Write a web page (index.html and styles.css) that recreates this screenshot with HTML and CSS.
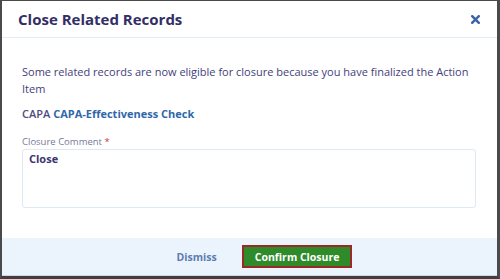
FILE: index.html
```html
<!DOCTYPE html>
<html lang="en">
<head>
  <meta charset="UTF-8" />
  <title>Close Related Records</title>
  <link rel="stylesheet" href="styles.css">
</head>
<body>
  <div class="modal">
    <header class="modal-header">
      <h1>Close Related Records</h1>
      <svg class="close-btn" width="9" height="9" viewBox="0 0 9 9">
        <path d="M1.2 1.2 L7.8 7.8 M7.8 1.2 L1.2 7.8" stroke="#3b63a4" stroke-width="2.4" stroke-linecap="square"/>
      </svg>
    </header>

    <div class="modal-body">
      <p class="intro">Some related records are now eligible for closure because you have finalized the Action Item</p>
      <p class="record"><span class="record-type">CAPA</span> <a href="#" class="record-link">CAPA-Effectiveness Check</a></p>
      <label class="field-label">Closure Comment <span class="required">*</span></label>
      <div class="comment-box">Close</div>
    </div>

    <footer class="modal-footer">
      <button class="btn-dismiss">Dismiss</button>
      <button class="btn-confirm">Confirm Closure</button>
    </footer>
  </div>
</body>
</html>
```

FILE: styles.css
```css
html, body {
  margin: 0;
  padding: 0;
  background: #ffffff;
}

body {
  font-family: 'Open Sans', 'Liberation Sans', sans-serif;
  color: #3f3a75;
}

.modal {
  box-sizing: border-box;
  width: 500px;
  height: 279px;
  display: flex;
  flex-direction: column;
  border-top: 1px solid #4a4a4a;
  border-left: 2px solid #4a4a4a;
  border-right: 3px solid #4a4a4a;
  border-bottom: 3px solid #3e3e3e;
  background: #ffffff;
}

/* Header */
.modal-header {
  height: 36px;
  display: flex;
  justify-content: space-between;
  align-items: center;
  padding: 0 17px 0 16px;
  border-bottom: 1px solid #e4ecf6;
}

.modal-header h1 {
  margin: 0;
  font-size: 15px;
  font-weight: bold;
  color: #322e66;
}

.close-btn {
  display: block;
}

/* Body */
.modal-body {
  flex: 1;
  padding: 25px 21px 0 20px;
}

.intro {
  margin: 0;
  font-size: 11px;
  line-height: 17px;
  color: #433e7a;
}

.record {
  margin: 8px 0 0 0;
  font-size: 11px;
  line-height: 17px;
  font-weight: 600;
}

.record-type {
  color: #4d4a7e;
}

.record-link {
  color: #2f67aa;
  text-decoration: none;
  font-weight: bold;
}

.field-label {
  display: block;
  margin-top: 13px;
  font-size: 9.5px;
  line-height: 13px;
  color: #7a779a;
}

.required {
  color: #d9352f;
}

.comment-box {
  box-sizing: border-box;
  margin-top: 1px;
  height: 59px;
  padding: 0 6px;
  border: 1px solid #dde9f7;
  border-radius: 3px;
  font-size: 11px;
  line-height: 17px;
  font-weight: bold;
  color: #3a3570;
}

/* Footer */
.modal-footer {
  height: 37px;
  display: flex;
  justify-content: center;
  align-items: center;
  gap: 25px;
  padding-left: 30px;
  background: #ebf3fc;
  border-bottom: 1px solid #cfd6de;
}

.modal-footer button {
  font-family: 'Open Sans', 'Liberation Sans', sans-serif;
  font-size: 10.5px;
  font-weight: bold;
  cursor: pointer;
}

.btn-dismiss {
  background: none;
  border: none;
  color: #5b7db3;
  padding: 0;
}

.btn-confirm {
  background: #2f8b2a;
  color: #ffffff;
  border: 2px solid #9a2a2a;
  padding: 3px 11px;
  height: 23px;
}
```
